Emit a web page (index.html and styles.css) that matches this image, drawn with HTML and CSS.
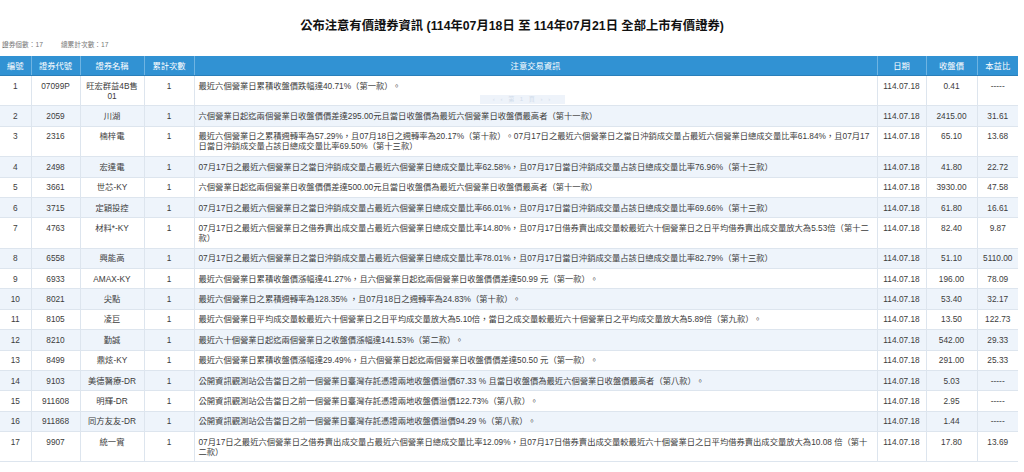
FILE: index.html
```html
<!DOCTYPE html>
<html lang="zh-Hant">
<head>
<meta charset="utf-8">
<title>公布注意有價證券資訊</title>
<link rel="stylesheet" href="styles.css">
</head>
<body>
<div class="page">
  <h1 class="title">公布注意有價證券資訊 (114年07月18日 至 114年07月21日 全部上市有價證券)</h1>
  <div class="summary"><span>證券個數：17</span><span class="sum2">總累計次數：17</span></div>
  <table class="grid">
    <colgroup>
      <col class="c-no"><col class="c-code"><col class="c-name"><col class="c-cnt"><col class="c-info"><col class="c-date"><col class="c-price"><col class="c-pe">
    </colgroup>
    <thead>
      <tr><th>編號</th><th>證券代號</th><th>證券名稱</th><th>累計次數</th><th>注意交易資訊</th><th>日期</th><th>收盤價</th><th>本益比</th></tr>
    </thead>
    <tbody>
      <tr><td>1</td><td>07099P</td><td>旺宏群益4B售<br>01</td><td>1</td><td class="info">最近六個營業日累積收盤價跌幅達40.71%（第一款）。</td><td>114.07.18</td><td>0.41</td><td>-----</td></tr>
      <tr><td>2</td><td>2059</td><td>川湖</td><td>1</td><td class="info">六個營業日起迄兩個營業日收盤價價差達295.00元且當日收盤價為最近六個營業日收盤價最高者（第十一款）</td><td>114.07.18</td><td>2415.00</td><td>31.61</td></tr>
      <tr><td>3</td><td>2316</td><td>楠梓電</td><td>1</td><td class="info">最近六個營業日之累積週轉率為57.29%，且07月18日之週轉率為20.17%（第十款）。07月17日之最近六個營業日之當日沖銷成交量占最近六個營業日總成交量比率61.84%，且07月17<br>日當日沖銷成交量占該日總成交量比率69.50%（第十三款）</td><td>114.07.18</td><td>65.10</td><td>13.68</td></tr>
      <tr><td>4</td><td>2498</td><td>宏達電</td><td>1</td><td class="info">07月17日之最近六個營業日之當日沖銷成交量占最近六個營業日總成交量比率62.58%，且07月17日當日沖銷成交量占該日總成交量比率76.96%（第十三款）</td><td>114.07.18</td><td>41.80</td><td>22.72</td></tr>
      <tr><td>5</td><td>3661</td><td>世芯-KY</td><td>1</td><td class="info">六個營業日起迄兩個營業日收盤價價差達500.00元且當日收盤價為最近六個營業日收盤價最高者（第十一款）</td><td>114.07.18</td><td>3930.00</td><td>47.58</td></tr>
      <tr><td>6</td><td>3715</td><td>定穎投控</td><td>1</td><td class="info">07月17日之最近六個營業日之當日沖銷成交量占最近六個營業日總成交量比率66.01%，且07月17日當日沖銷成交量占該日總成交量比率69.66%（第十三款）</td><td>114.07.18</td><td>61.80</td><td>16.61</td></tr>
      <tr><td>7</td><td>4763</td><td>材料*-KY</td><td>1</td><td class="info">07月17日之最近六個營業日之借券賣出成交量占最近六個營業日總成交量比率14.80%，且07月17日借券賣出成交量較最近六十個營業日之日平均借券賣出成交量放大為5.53倍（第十二<br>款）</td><td>114.07.18</td><td>82.40</td><td>9.87</td></tr>
      <tr><td>8</td><td>6558</td><td>興能高</td><td>1</td><td class="info">07月17日之最近六個營業日之當日沖銷成交量占最近六個營業日總成交量比率78.01%，且07月17日當日沖銷成交量占該日總成交量比率82.79%（第十三款）</td><td>114.07.18</td><td>51.10</td><td>5110.00</td></tr>
      <tr><td>9</td><td>6933</td><td>AMAX-KY</td><td>1</td><td class="info">最近六個營業日累積收盤價漲幅達41.27%，且六個營業日起迄兩個營業日收盤價價差達50.99 元（第一款）。</td><td>114.07.18</td><td>196.00</td><td>78.09</td></tr>
      <tr><td>10</td><td>8021</td><td>尖點</td><td>1</td><td class="info">最近六個營業日之累積週轉率為128.35% ，且07月18日之週轉率為24.83%（第十款）。</td><td>114.07.18</td><td>53.40</td><td>32.17</td></tr>
      <tr><td>11</td><td>8105</td><td>凌巨</td><td>1</td><td class="info">最近六個營業日平均成交量較最近六十個營業日之日平均成交量放大為5.10倍，當日之成交量較最近六十個營業日之平均成交量放大為5.89倍（第九款）。</td><td>114.07.18</td><td>13.50</td><td>122.73</td></tr>
      <tr><td>12</td><td>8210</td><td>勤誠</td><td>1</td><td class="info">最近六十個營業日起迄兩個營業日之收盤價漲幅達141.53%（第二款）。</td><td>114.07.18</td><td>542.00</td><td>29.33</td></tr>
      <tr><td>13</td><td>8499</td><td>鼎炫-KY</td><td>1</td><td class="info">最近六個營業日累積收盤價漲幅達29.49%，且六個營業日起迄兩個營業日收盤價價差達50.50 元（第一款）。</td><td>114.07.18</td><td>291.00</td><td>25.33</td></tr>
      <tr><td>14</td><td>9103</td><td>美德醫療-DR</td><td>1</td><td class="info">公開資訊觀測站公告當日之前一個營業日臺灣存託憑證兩地收盤價溢價67.33 % 且當日收盤價為最近六個營業日收盤價最高者（第八款）。</td><td>114.07.18</td><td>5.03</td><td>-----</td></tr>
      <tr><td>15</td><td>911608</td><td>明輝-DR</td><td>1</td><td class="info">公開資訊觀測站公告當日之前一個營業日臺灣存託憑證兩地收盤價溢價122.73%（第八款）。</td><td>114.07.18</td><td>2.95</td><td>-----</td></tr>
      <tr><td>16</td><td>911868</td><td>同方友友-DR</td><td>1</td><td class="info">公開資訊觀測站公告當日之前一個營業日臺灣存託憑證兩地收盤價溢價94.29 %（第八款）。</td><td>114.07.18</td><td>1.44</td><td>-----</td></tr>
      <tr><td>17</td><td>9907</td><td>統一實</td><td>1</td><td class="info">07月17日之最近六個營業日之借券賣出成交量占最近六個營業日總成交量比率12.09%，且07月17日借券賣出成交量較最近六十個營業日之日平均借券賣出成交量放大為10.08 倍（第十<br>二款）</td><td>114.07.18</td><td>17.80</td><td>13.69</td></tr>
    </tbody>
  </table>
  <div class="ghost">‹ ‹ 第 1 頁 › ›</div>
</div>
</body>
</html>
```

FILE: styles.css
```css
* { box-sizing: border-box; }

html, body {
  margin: 0;
  padding: 0;
  background: #ffffff;
}

body {
  font-family: "Liberation Sans", "Noto Sans CJK TC", sans-serif;
  color: #3c3c3c;
}

.page {
  position: relative;
  width: 1024px;
  padding-top: 18px;
}

.title {
  margin: 0;
  font-size: 12.3px;
  line-height: 16px;
  font-weight: bold;
  text-align: center;
  color: #111111;
}

.summary {
  margin-top: 6px;
  padding-left: 2px;
  font-size: 6.7px;
  line-height: 10px;
  color: #777777;
}

.summary .sum2 {
  margin-left: 18px;
}

.grid {
  margin-top: 6px;
  width: 1018px;
  table-layout: fixed;
  border-collapse: collapse;
  font-size: 8.3px;
  line-height: 10px;
}

.c-no { width: 31px; }
.c-code { width: 49px; }
.c-name { width: 64px; }
.c-cnt { width: 50px; }
.c-info { width: 683px; }
.c-date { width: 49px; }
.c-price { width: 51px; }
.c-pe { width: 41px; }

.grid th {
  background: #3192d3;
  color: #ffffff;
  font-weight: normal;
  text-align: center;
  padding: 4.5px 2px;
  border-left: 1px solid #6fb4e2;
  border-bottom: 1px solid #2a7fba;
  white-space: nowrap;
}

.grid th:first-child { border-left: none; }

.grid td {
  padding: 4.7px 2px;
  text-align: center;
  vertical-align: top;
  border: 1px solid #dde5ee;
  border-top: none;
  white-space: nowrap;
}

.grid td:first-child { border-left: none; }
.grid td:last-child { border-right: none; }

.grid td.info {
  text-align: left;
  padding-left: 4px;
  padding-right: 3px;
}

.grid tbody tr:nth-child(even) td {
  background: #eef4fb;
}

.ghost {
  position: absolute;
  left: 480px;
  top: 95px;
  width: 85px;
  height: 9px;
  background: #eef3fa;
  color: #d2ddeb;
  font-size: 6px;
  line-height: 9px;
  text-align: center;
  letter-spacing: 2px;
}
```
